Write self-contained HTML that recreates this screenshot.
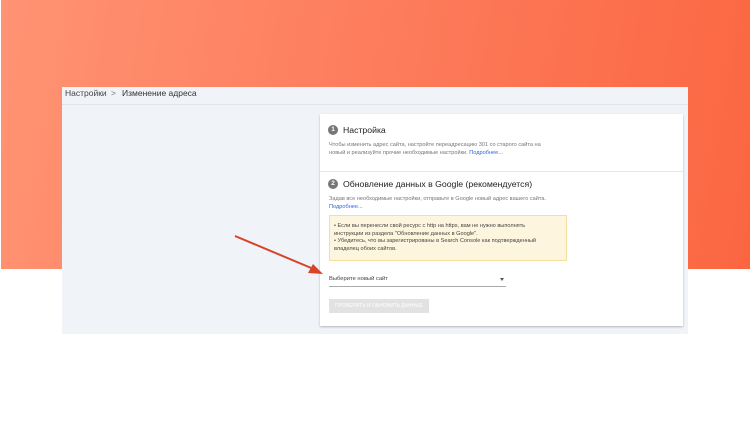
<!DOCTYPE html><html><head><meta charset="utf-8"><style>
body{margin:0;width:751px;height:422px;background:#fff;position:relative;overflow:hidden;font-family:"Liberation Sans",sans-serif}
.bg{position:absolute;left:1px;top:0;width:749px;height:269px;background:linear-gradient(100deg,#ff9373 0%,#fd7e5e 45%,#fb6641 100%)}
.panel{position:absolute;left:62px;top:87px;width:626px;height:247px;background:#f0f3f7}
.bc{position:absolute;left:62px;top:87px;width:626px;height:17px;border-bottom:1px solid #e3e3e3;font-size:8.5px;color:#444}
.bc span{position:absolute;top:1px}
.card{position:absolute;left:320px;top:114px;width:363px;height:212px;background:#fff;box-shadow:0 1px 2px rgba(0,0,0,.25)}
.t{position:absolute;color:#222;font-size:8.7px;display:flex;align-items:center;height:12px}
.s{position:absolute;color:#777;font-size:5.6px;line-height:7.5px;white-space:nowrap}
.num{display:inline-block;width:10px;height:10px;border-radius:50%;background:#777;color:#fff;font-size:6.5px;font-weight:bold;text-align:center;line-height:10px;margin-right:5px}
a{color:#3367d6;text-decoration:none}
</style></head><body>
<div class="bg"></div>
<div class="panel"></div>
<div class="bc"><span style="left:3px">Настройки</span><span style="left:49px;color:#777">&gt;</span><span style="left:60px;color:#333">Изменение адреса</span></div>
<div class="card">
<div class="t" style="left:8px;top:10px"><span class="num">1</span>Настройка</div>
<div class="s" style="left:9px;top:28px">Чтобы изменить адрес сайта, настройте переадресацию 301 со старого сайта на<br>новый и реализуйте прочие необходимые настройки. <a>Подробнее...</a></div>
<div style="position:absolute;left:0;top:57px;width:363px;height:1px;background:#e8e8e8"></div>
<div class="t" style="left:8px;top:64px"><span class="num">2</span>Обновление данных в Google (рекомендуется)</div>
<div class="s" style="left:9px;top:82px">Задав все необходимые настройки, отправьте в Google новый адрес вашего сайта.<br><a>Подробнее...</a></div>
<div style="position:absolute;left:9px;top:101px;width:236px;height:44px;background:#fdf5dd;border:1px solid #f5dea0"></div>
<div class="s" style="left:14px;top:109px;color:#444">• Если вы перенесли свой ресурс с http на https, вам не нужно выполнять<br>инструкции из раздела "Обновление данных в Google".<br>• Убедитесь, что вы зарегистрированы в Search Console как подтвержденный<br>владелец обоих сайтов.</div>
<div class="s" style="left:9px;top:162px;color:#444;font-size:5.8px">Выберите новый сайт</div>
<div style="position:absolute;left:180px;top:164px;border:2.5px solid transparent;border-top:3px solid #555"></div>
<div style="position:absolute;left:9px;top:172px;width:177px;height:1px;background:#aaa"></div>
<div style="position:absolute;left:9px;top:185px;width:100px;height:14px;background:#e2e2e2;color:#fff;font-size:5px;line-height:14px;text-align:center">ПРОВЕРИТЬ И ОБНОВИТЬ ДАННЫЕ</div>
</div>
<svg style="position:absolute;left:0;top:0" width="751" height="422"><line x1="235" y1="236" x2="316" y2="270" stroke="#d8432a" stroke-width="2"/><polygon points="323,274 308,273 313,264" fill="#d8432a"/></svg>
</body></html>
